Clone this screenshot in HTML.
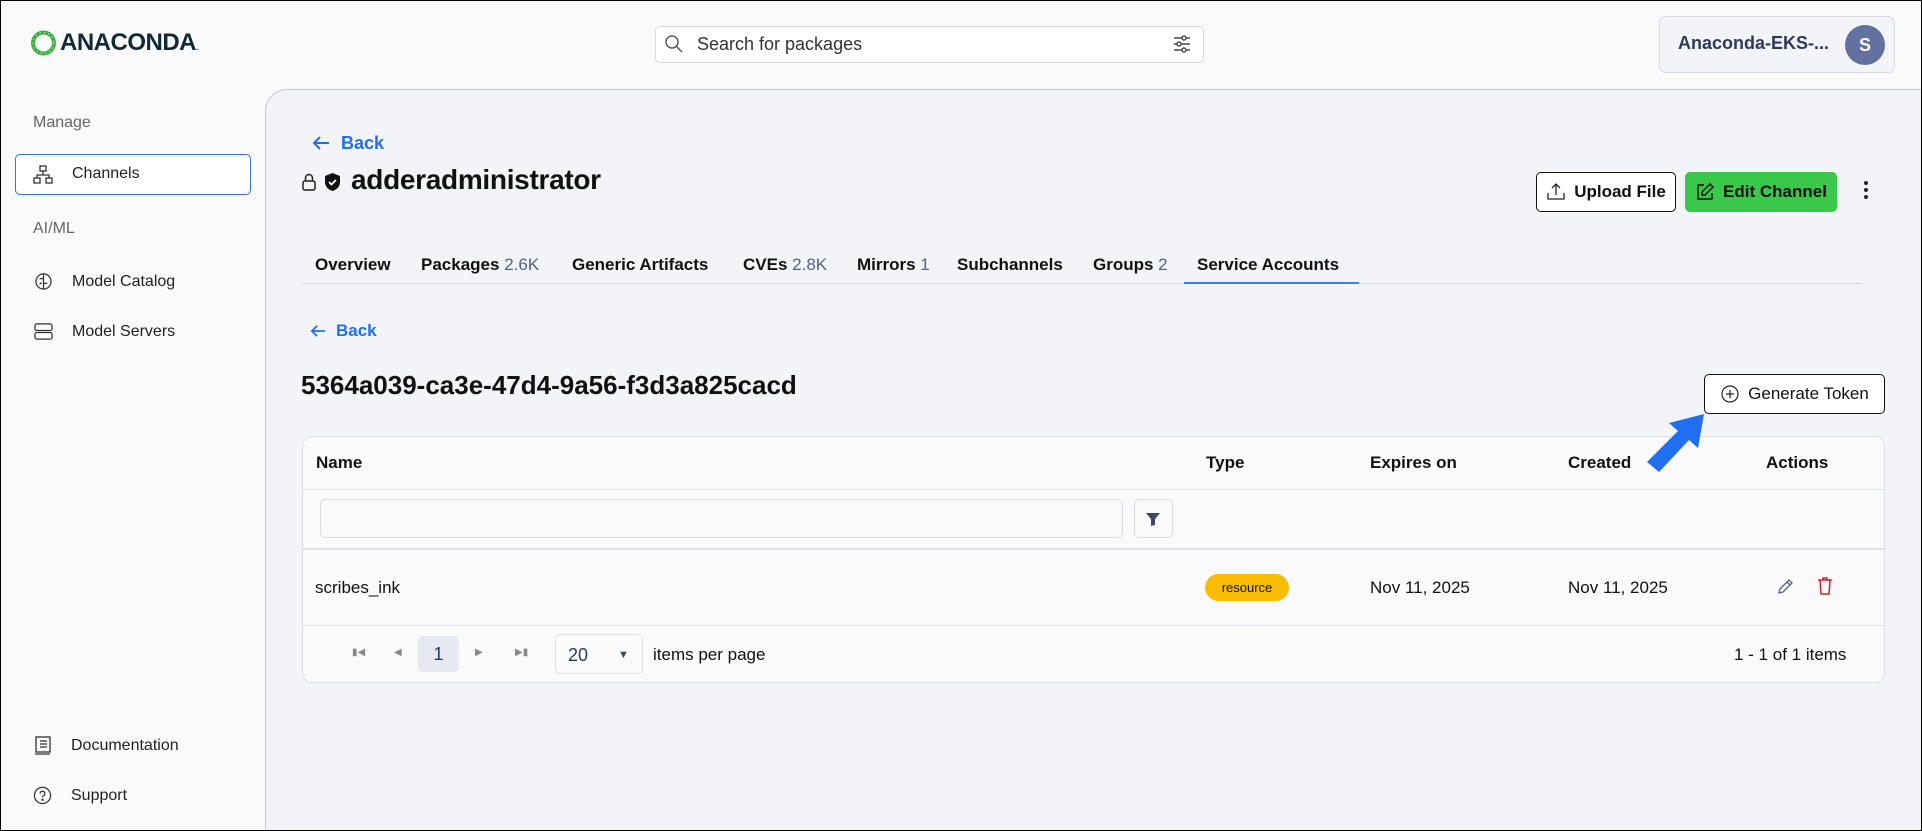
<!DOCTYPE html>
<html><head><meta charset="utf-8"><style>
*{box-sizing:border-box;margin:0;padding:0}
html,body{width:1922px;height:831px;overflow:hidden}
body{position:relative;background:#fafafa;font-family:"Liberation Sans",sans-serif;color:#111;}
.a{position:absolute;white-space:nowrap}
.frame{position:absolute;left:0;top:0;width:1922px;height:831px;border:1px solid #000;pointer-events:none;z-index:10}
.main{position:absolute;left:265px;top:89px;width:1657px;height:742px;background:#f3f4f7;border-left:1px solid #c3c9dd;border-top:1px solid #c3c9dd;border-top-left-radius:22px}
.side{font-size:16px;color:#222}
.tab{position:absolute;top:255px;font-size:17px;font-weight:bold;color:#111}
.tab span{font-weight:normal;color:#556088}
.btn{position:absolute;border:1px solid #111;border-radius:5px;background:#fff;font-weight:bold;font-size:17px;display:flex;align-items:center;justify-content:center;gap:8px}
.th{position:absolute;top:453px;font-size:17px;font-weight:bold}
.blue{color:#1f6ff0}
</style></head><body>
<!-- header -->
<svg class="a" style="left:30px;top:29px" width="27" height="28" viewBox="0 0 27 28"><circle cx="13.5" cy="14" r="10.5" fill="none" stroke="#3cb043" stroke-width="4"/><circle cx="13.5" cy="14" r="10.5" fill="none" stroke="#bfe8b0" stroke-width="1" stroke-dasharray="1.5 3"/></svg>
<div class="a" style="left:60px;top:29px;font-size:24px;font-weight:bold;color:#112a35;letter-spacing:-0.5px">ANACONDA<span style="font-size:8px">.</span></div>
<div class="a" style="left:655px;top:26px;width:549px;height:37px;border:1px solid #d6d9e0;border-radius:5px;background:#fff"></div>
<svg class="a" style="left:664px;top:34px" width="20" height="20" viewBox="0 0 20 20"><circle cx="8" cy="8" r="6" fill="none" stroke="#555" stroke-width="1.4"/><path d="M12.5 12.5L18 18" stroke="#555" stroke-width="1.4"/></svg>
<div class="a" style="left:697px;top:34px;font-size:18px;color:#333">Search for packages</div>
<svg class="a" style="left:1172px;top:34px" width="20" height="20" viewBox="0 0 20 20" fill="none" stroke="#444" stroke-width="1.4"><path d="M2 4h16M2 10h16M2 16h16"/><circle cx="12" cy="4" r="2" fill="#fff"/><circle cx="7" cy="10" r="2" fill="#fff"/><circle cx="12" cy="16" r="2" fill="#fff"/></svg>
<div class="a" style="left:1659px;top:16px;width:236px;height:57px;border:1px solid #d8dbe4;border-radius:7px;background:#f3f4f7"></div>
<div class="a" style="left:1678px;top:33px;font-size:18px;font-weight:bold;color:#2e3a5c">Anaconda-EKS-...</div>
<div class="a" style="left:1845px;top:25px;width:40px;height:40px;border-radius:50%;background:#6271a0;color:#fff;font-weight:bold;font-size:18px;text-align:center;line-height:40px">S</div>
<!-- sidebar -->
<div class="a" style="left:33px;top:114px;font-size:16px;color:#666">Manage</div>
<div class="a" style="left:15px;top:154px;width:236px;height:41px;border:1px solid #3d6fe0;border-radius:5px;background:#fff"></div>
<svg class="a" style="left:33px;top:165px" width="20" height="20" viewBox="0 0 20 20" fill="none" stroke="#333" stroke-width="1.3"><rect x="7" y="1" width="6" height="5"/><rect x="1" y="13" width="6" height="5"/><rect x="13" y="13" width="6" height="5"/><path d="M10 6v4M4 13v-3h12v3"/></svg>
<div class="a side" style="left:72px;top:165px">Channels</div>
<div class="a" style="left:33px;top:220px;font-size:16px;color:#666">AI/ML</div>
<svg class="a" style="left:34px;top:272px" width="19" height="19" viewBox="0 0 20 20" fill="none" stroke="#333" stroke-width="1.3"><circle cx="10" cy="10" r="8"/><path d="M10 2v16M6 7h4M10 12h4M6 13l2-2"/></svg>
<div class="a side" style="left:72px;top:273px">Model Catalog</div>
<svg class="a" style="left:34px;top:322px" width="19" height="19" viewBox="0 0 20 20" fill="none" stroke="#333" stroke-width="1.3"><rect x="1" y="2" width="18" height="7" rx="2"/><rect x="1" y="11" width="18" height="7" rx="2"/></svg>
<div class="a side" style="left:72px;top:323px">Model Servers</div>
<svg class="a" style="left:34px;top:736px" width="18" height="19" viewBox="0 0 18 19" fill="none" stroke="#333" stroke-width="1.3"><rect x="2" y="1" width="14" height="15"/><path d="M1 18h15M6 5h7M6 8h7M6 11h7"/></svg>
<div class="a side" style="left:71px;top:737px">Documentation</div>
<svg class="a" style="left:33px;top:786px" width="19" height="19" viewBox="0 0 20 20" fill="none" stroke="#333" stroke-width="1.3"><circle cx="10" cy="10" r="8.5"/><path d="M7.5 8a2.5 2.5 0 1 1 3.5 2.3c-.7.3-1 .8-1 1.5"/><circle cx="10" cy="14.5" r=".6" fill="#333"/></svg>
<div class="a side" style="left:71px;top:787px">Support</div>
<!-- main -->
<div class="main"></div>
<svg class="a" style="left:312px;top:135px" width="18" height="16" viewBox="0 0 18 16" fill="none" stroke="#1f6ff0" stroke-width="2"><path d="M17 8H2M8 2L2 8l6 6"/></svg>
<div class="a blue" style="left:341px;top:133px;font-size:18px;font-weight:bold">Back</div>
<svg class="a" style="left:301px;top:172px" width="16" height="20" viewBox="0 0 16 20" fill="none" stroke="#222" stroke-width="1.5"><rect x="2" y="9" width="12" height="9" rx="2"/><path d="M4.5 9V6a3.5 3.5 0 0 1 7 0v3"/></svg>
<svg class="a" style="left:324px;top:172px" width="17" height="20" viewBox="0 0 17 20"><path d="M8.5 1L16 4v6c0 4.5-3.5 8-7.5 9C4.5 18 1 14.5 1 10V4z" fill="#111"/><path d="M5 10l2.5 2.5L12 8" stroke="#fff" stroke-width="1.8" fill="none"/></svg>
<div class="a" style="left:351px;top:164px;font-size:28px;font-weight:bold;letter-spacing:-0.3px">adderadministrator</div>
<div class="btn" style="left:1536px;top:172px;width:140px;height:40px"><svg width="20" height="20" viewBox="0 0 20 20" fill="none" stroke="#222" stroke-width="1.3"><path d="M10 13V2M6 6l4-4 4 4M2 11v6h16v-6"/></svg>Upload File</div>
<div class="btn" style="left:1685px;top:172px;width:152px;height:40px;background:#3ac84a;border-color:#3ac84a"><svg width="20" height="20" viewBox="0 0 20 20" fill="none" stroke="#111" stroke-width="1.4"><path d="M9 3H3v14h14v-6"/><path d="M15 2l3 3-8 8H7v-3z"/></svg>Edit Channel</div>
<div class="a" style="left:1864px;top:181px;width:4px;line-height:0"><div style="width:4px;height:4px;border-radius:2px;background:#222;margin-bottom:3px"></div><div style="width:4px;height:4px;border-radius:2px;background:#222;margin-bottom:3px"></div><div style="width:4px;height:4px;border-radius:2px;background:#222"></div></div>
<!-- tabs -->
<div class="tab" style="left:315px">Overview</div>
<div class="tab" style="left:421px">Packages <span>2.6K</span></div>
<div class="tab" style="left:572px">Generic Artifacts</div>
<div class="tab" style="left:743px">CVEs <span>2.8K</span></div>
<div class="tab" style="left:857px">Mirrors <span>1</span></div>
<div class="tab" style="left:957px">Subchannels</div>
<div class="tab" style="left:1093px">Groups <span>2</span></div>
<div class="tab" style="left:1197px">Service Accounts</div>
<div class="a" style="left:302px;top:283px;width:1560px;height:1px;background:#d5d8e0"></div>
<div class="a" style="left:1184px;top:282px;width:175px;height:2px;background:#3d7df0"></div>
<svg class="a" style="left:310px;top:324px" width="16" height="14" viewBox="0 0 18 16" fill="none" stroke="#1f6ff0" stroke-width="2"><path d="M17 8H2M8 2L2 8l6 6"/></svg>
<div class="a blue" style="left:336px;top:321px;font-size:17px;font-weight:bold">Back</div>
<div class="a" style="left:301px;top:370px;font-size:26px;font-weight:bold">5364a039-ca3e-47d4-9a56-f3d3a825cacd</div>
<div class="btn" style="left:1704px;top:374px;width:181px;height:40px;font-weight:normal;color:#111"><svg width="20" height="20" viewBox="0 0 20 20" fill="none" stroke="#222" stroke-width="1.2"><circle cx="10" cy="10" r="8"/><path d="M10 6v8M6 10h8"/></svg>Generate Token</div>
<svg class="a" style="left:1640px;top:410px;z-index:5" width="68" height="64" viewBox="0 0 68 64"><path d="M64 4L58 38 49 30 19 62 7 52 38 21 29 13z" fill="#1f6ff0"/></svg>
<!-- table -->
<div class="a" style="left:302px;top:436px;width:1583px;height:247px;border:1px solid #dcdfe5;border-radius:10px;background:#fafafa"></div>
<div class="th" style="left:316px">Name</div>
<div class="th" style="left:1206px">Type</div>
<div class="th" style="left:1370px">Expires on</div>
<div class="th" style="left:1568px">Created</div>
<div class="th" style="left:1766px">Actions</div>
<div class="a" style="left:303px;top:489px;width:1581px;height:1px;background:#dcdfe5"></div>
<div class="a" style="left:320px;top:499px;width:803px;height:39px;border:1px solid #d8dbe2;border-radius:5px;background:#fafafa"></div>
<div class="a" style="left:1134px;top:499px;width:39px;height:39px;border:1px solid #d8dbe2;border-radius:5px;background:#fafafa"></div>
<svg class="a" style="left:1145px;top:511px" width="16" height="16" viewBox="0 0 16 16"><path d="M1 2h14L10 8v6l-4 1V8z" fill="#3d4666"/></svg>
<div class="a" style="left:303px;top:548px;width:1581px;height:2px;background:#dfe1e7"></div>
<div class="a" style="left:315px;top:578px;font-size:17px">scribes_ink</div>
<div class="a" style="left:1205px;top:574px;width:84px;height:27px;border-radius:14px;background:#fbbc05;font-size:13px;text-align:center;line-height:27px">resource</div>
<div class="a" style="left:1370px;top:578px;font-size:17px">Nov 11, 2025</div>
<div class="a" style="left:1568px;top:578px;font-size:17px">Nov 11, 2025</div>
<svg class="a" style="left:1776px;top:578px" width="18" height="18" viewBox="0 0 18 18" fill="none" stroke="#56608a" stroke-width="1.3"><path d="M13 2l3 3-9 9-4 1 1-4z M11 4l3 3"/></svg>
<svg class="a" style="left:1817px;top:576px" width="16" height="20" viewBox="0 0 16 20" fill="none" stroke="#d0202f" stroke-width="1.5"><path d="M1 4h14M6 4V2h4v2M3 4l1 14h8l1-14"/></svg>
<div class="a" style="left:303px;top:625px;width:1581px;height:1px;background:#dcdfe5"></div>
<div class="a" style="left:352px;top:647px;font-size:10px;color:#888">&#9646;&#9664;</div>
<div class="a" style="left:394px;top:647px;font-size:10px;color:#888">&#9664;</div>
<div class="a" style="left:418px;top:636px;width:41px;height:36px;border-radius:5px;background:#e6e9f1;font-size:18px;text-align:center;line-height:36px;color:#2e3a5c">1</div>
<div class="a" style="left:475px;top:647px;font-size:10px;color:#888">&#9654;</div>
<div class="a" style="left:515px;top:647px;font-size:10px;color:#888">&#9654;&#9646;</div>
<div class="a" style="left:555px;top:634px;width:88px;height:40px;border:1px solid #dcdfe5;border-radius:5px;background:#fafafa"></div>
<div class="a" style="left:568px;top:645px;font-size:18px;color:#2e3a5c">20</div>
<div class="a" style="left:618px;top:649px;font-size:11px;color:#3d4666">&#9660;</div>
<div class="a" style="left:653px;top:645px;font-size:17px">items per page</div>
<div class="a" style="left:1734px;top:645px;font-size:17px">1 - 1 of 1 items</div>
<div class="frame"></div>
</body></html>
